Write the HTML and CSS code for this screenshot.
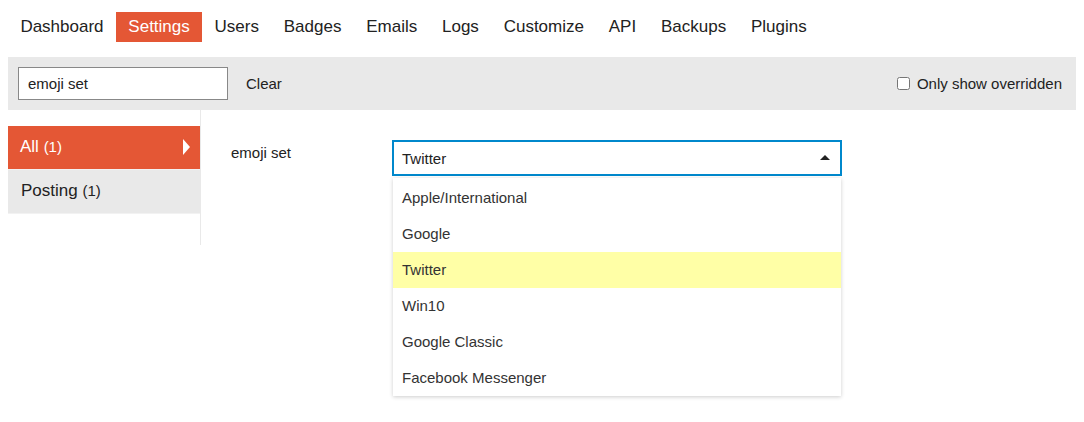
FILE: index.html
```html
<!DOCTYPE html>
<html lang="en">
<head>
    <meta charset="UTF-8">
    <title>Admin - Settings</title>
    <link rel="stylesheet" href="styles.css">
</head>
<body>
    <ul class="admin-nav">
        <li><a href="#">Dashboard</a></li>
        <li><a href="#" class="active">Settings</a></li>
        <li><a href="#">Users</a></li>
        <li><a href="#">Badges</a></li>
        <li><a href="#">Emails</a></li>
        <li><a href="#">Logs</a></li>
        <li><a href="#">Customize</a></li>
        <li><a href="#">API</a></li>
        <li><a href="#">Backups</a></li>
        <li><a href="#">Plugins</a></li>
    </ul>

    <div class="filter-bar">
        <input type="text" class="filter-input" value="emoji set">
        <a href="#" class="clear-link">Clear</a>
        <label class="overridden"><input type="checkbox"> Only show overridden</label>
    </div>

    <div class="admin-body">
        <ul class="sidebar">
            <li class="active"><a href="#">All <span class="count">(1)</span></a><span class="arrow"></span></li>
            <li><a href="#">Posting <span class="count">(1)</span></a></li>
        </ul>

        <div class="content">
            <div class="setting-row">
                <div class="setting-label">emoji set</div>
                <div class="setting-value">
                    <div class="select-box">
                        <span>Twitter</span>
                        <span class="caret"></span>
                    </div>
                    <ul class="select-list">
                        <li>Apple/International</li>
                        <li>Google</li>
                        <li class="highlighted">Twitter</li>
                        <li>Win10</li>
                        <li>Google Classic</li>
                        <li>Facebook Messenger</li>
                    </ul>
                </div>
            </div>
        </div>
    </div>
</body>
</html>
```

FILE: styles.css
```css
body {
    margin: 8px;
    min-height: 406px;
    font-family: "Liberation Sans", Arial, sans-serif;
    color: #222;
    background: #fff;
}

a {
    color: #222;
    text-decoration: none;
}

ul {
    list-style: none;
    margin: 0;
    padding: 0;
}

/* top navigation */
.admin-nav {
    display: flex;
    margin-top: 4px;
}

.admin-nav a {
    display: block;
    padding: 5px 12.4px;
    font-size: 17px;
    line-height: 20px;
}

.admin-nav a.active {
    background-color: #e45735;
    color: #fff;
}

/* filter bar */
.filter-bar {
    display: flex;
    align-items: center;
    margin-top: 15px;
    padding: 10px 14px 10px 10px;
    background-color: #e9e9e9;
    font-size: 15px;
}

.filter-input {
    box-sizing: border-box;
    width: 210px;
    height: 33px;
    margin: 0;
    padding: 0 9px;
    border: 1px solid #888;
    font-family: inherit;
    font-size: 15px;
    color: #222;
    background: #fff;
}

.clear-link {
    margin-left: 18px;
}

.overridden {
    display: flex;
    align-items: center;
    margin-left: auto;
}

.overridden input {
    margin: 0 7px 0 0;
    width: 13px;
    height: 13px;
}

/* main area */
.admin-body {
    display: flex;
}

.sidebar {
    width: 192px;
    margin-top: 16px;
    align-self: flex-start;
}

.sidebar li {
    position: relative;
    background-color: #e9e9e9;
    border-bottom: 1px solid #f2f2f2;
}

.sidebar li a {
    display: block;
    padding: 12px 12px 13px 13px;
    font-size: 17px;
    line-height: 18px;
}

.sidebar li.active {
    background-color: #e45735;
}

.sidebar li.active a {
    padding-left: 12px;
    color: #fff;
}

.sidebar .count {
    font-size: 15px;
}

.sidebar .arrow {
    position: absolute;
    right: 10px;
    top: 13px;
    border-top: 8px solid transparent;
    border-bottom: 8px solid transparent;
    border-left: 7px solid #fff;
}

.content {
    flex: 1;
    padding: 30px 30px 69px 30px;
    border-left: 1px solid #e9e9e9;
    font-size: 15px;
}

.setting-row {
    display: flex;
}

.setting-label {
    width: 161px;
    padding-top: 4px;
}

.setting-value {
    position: relative;
    width: 450px;
}

.select-box {
    box-sizing: border-box;
    display: flex;
    align-items: center;
    justify-content: space-between;
    height: 36px;
    padding: 0 10px 0 8px;
    border: 2px solid #0088cc;
    color: #222;
}

.caret {
    border-left: 5px solid transparent;
    border-right: 5px solid transparent;
    border-bottom: 5px solid #222;
    margin-top: -2px;
}

.select-list {
    position: absolute;
    top: 38px;
    left: 1px;
    right: 1px;
    padding-top: 2px;
    background: #fff;
    box-shadow: 0 1px 4px rgba(0, 0, 0, 0.2);
    color: #333;
}

.select-list li {
    height: 36px;
    line-height: 36px;
    padding-left: 9px;
}

.select-list li.highlighted {
    background-color: #ffffa6;
}
```
